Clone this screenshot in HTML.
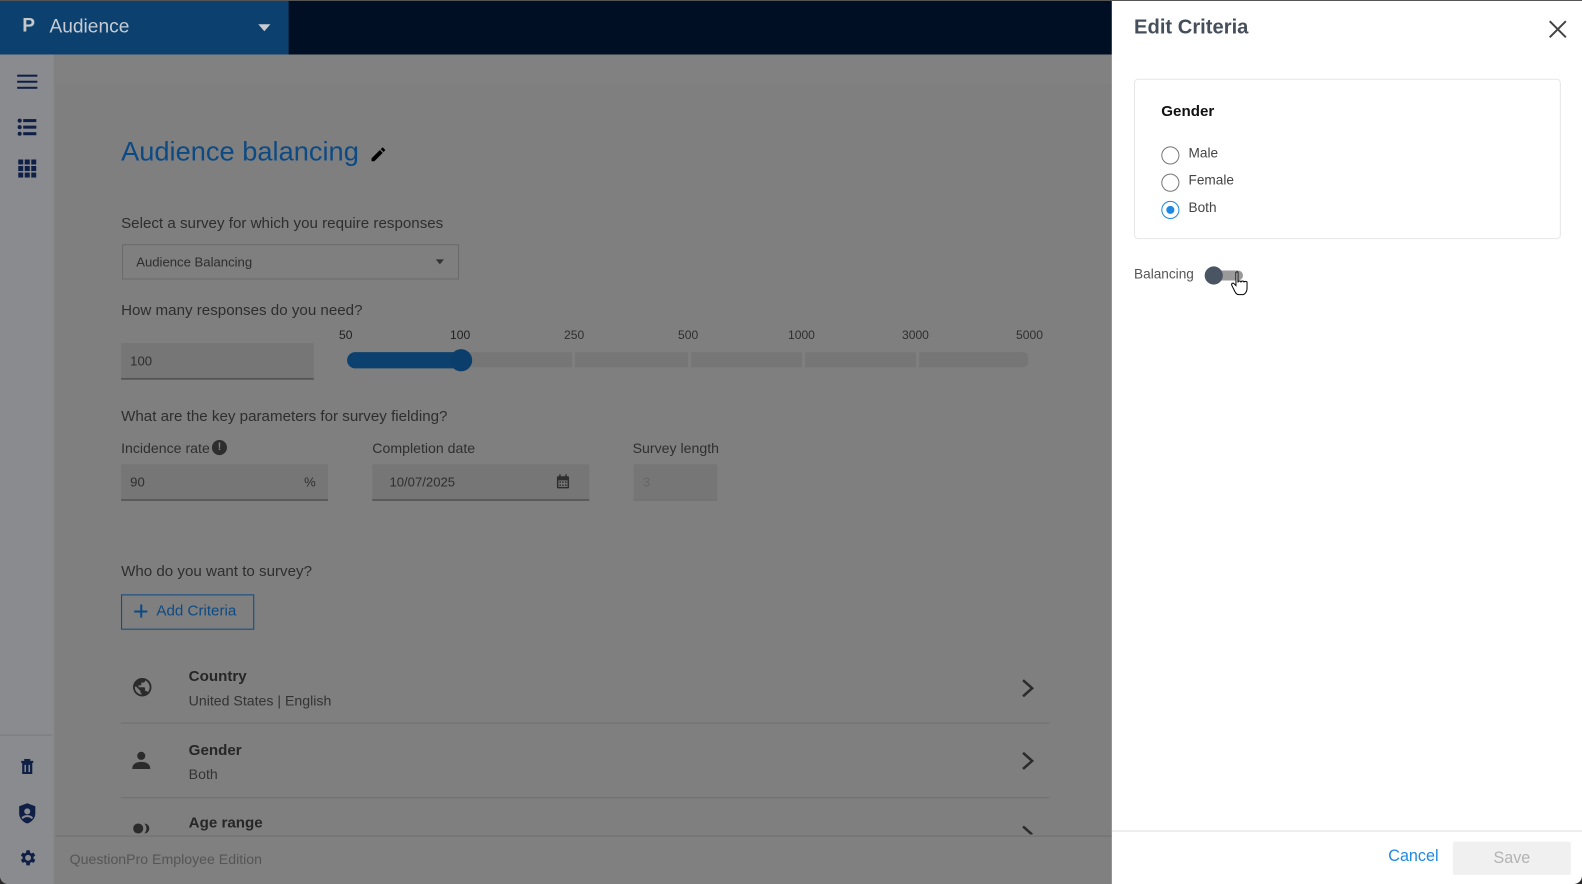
<!DOCTYPE html>
<html><head><meta charset="utf-8"><style>
*{box-sizing:border-box;margin:0;padding:0}
html,body{width:1582px;height:884px;overflow:hidden}
body{background:#2a2a2a;font-family:"Liberation Sans",sans-serif;color:#2f2f2f;position:relative}
#w{position:absolute;left:0;top:0;width:1568px;height:876px;background:#7f7f7f;transform:scale(1.00893,1.00913);transform-origin:0 0;overflow:hidden;border-radius:0 0 8px 8px}
.abs{position:absolute}
.top1{left:0;top:0;width:286px;height:54px;background:#0c416f;border-top:1px solid #555}
.top2{left:286px;top:0;width:816px;height:54px;background:#000f24;border-top:1px solid #555}
.side{left:0;top:54px;width:54px;height:830px;background:#8a8b8f;border-right:1px solid #858585}
.lbl{font-size:15px;color:#2e2e2e}
.inp{background:#767676;border-bottom:1px solid #3c3c3c;font-size:13px;color:#2e2e2e;padding-left:9px;display:flex;align-items:center}
.seg{top:349px;height:15px;background:#767676}
.tick{top:325px;font-size:12px;color:#2e2e2e}
.row{left:120px;width:920px;border-bottom:1px solid #6e6e6e}
.rt{font-size:15px;font-weight:bold;color:#262626}
.rs{font-size:14px;color:#333}
.panel{left:1102px;top:0;width:466px;height:876px;background:#fff;border-top:1px solid #555;border-radius:0 0 8px 0}
.radio{width:18px;height:18px;border-radius:50%;border:1.5px solid #777;position:absolute;left:1151px}
.rl{position:absolute;left:1178px;font-size:13.5px;color:#444}
</style></head><body><div id="w">
<div class="abs top1"><span class="abs" style="left:22px;top:14px;font-size:19px;font-weight:bold;color:#c8c8c8">P</span><span class="abs" style="left:49px;top:15px;font-size:19px;color:#c8ccd2">Audience</span>
<div class="abs" style="left:256px;top:23px;border:6px solid transparent;border-top:7px solid #c8ccd2;border-bottom:0"></div></div>
<div class="abs top2"></div>
<div class="abs side">
<div class="abs" style="left:17px;top:20px;width:20px;height:2px;background:#0f1f45;box-shadow:0 6px 0 #0f1f45,0 12px 0 #0f1f45"></div>
<svg class="abs" style="left:17px;top:63px" width="20" height="18"><g fill="#0f1f45"><circle cx="2.5" cy="2.5" r="2"/><circle cx="2.5" cy="9" r="2"/><circle cx="2.5" cy="15.5" r="2"/><rect x="6" y="1" width="13" height="3"/><rect x="6" y="7.5" width="13" height="3"/><rect x="6" y="14" width="13" height="3"/></g></svg>
<svg class="abs" style="left:18px;top:104px" width="18" height="18"><g fill="#0f1f45"><rect x="0" y="0" width="5" height="5"/><rect x="6.5" y="0" width="5" height="5"/><rect x="13" y="0" width="5" height="5"/><rect x="0" y="6.5" width="5" height="5"/><rect x="6.5" y="6.5" width="5" height="5"/><rect x="13" y="6.5" width="5" height="5"/><rect x="0" y="13" width="5" height="5"/><rect x="6.5" y="13" width="5" height="5"/><rect x="13" y="13" width="5" height="5"/></g></svg>
<div class="abs" style="left:0;top:674px;width:52px;border-top:1px solid #7a7a7a"></div>
<svg class="abs" style="left:20px;top:698px" width="14" height="16"><path d="M1 2h12v2H1zM4 0h6v2H4zM2 4h10v11H2z" fill="#0f1f45"/><path d="M5 6v7M9 6v7" stroke="#8a8b8f" stroke-width="1.5"/></svg>
<svg class="abs" style="left:17px;top:741px" width="20" height="22"><path d="M10 1L18 4v7c0 5-4 9-8 10C6 20 2 16 2 11V4z" fill="#0f1f45"/><circle cx="10" cy="9" r="3" fill="#8a8b8f"/><path d="M5 16c2-3 8-3 10 0" stroke="#8a8b8f" stroke-width="2" fill="none"/></svg>
<svg class="abs" style="left:17px;top:786px" width="20" height="20" viewBox="0 0 24 24"><path fill="#0f1f45" d="M19.4 13a7.5 7.5 0 000-2l2.1-1.6-2-3.5-2.5 1a7.6 7.6 0 00-1.7-1L15 3h-4l-.4 2.9a7.6 7.6 0 00-1.7 1l-2.5-1-2 3.5L6.6 11a7.5 7.5 0 000 2l-2.1 1.6 2 3.5 2.5-1a7.6 7.6 0 001.7 1L11 21h4l.4-2.9a7.6 7.6 0 001.7-1l2.5 1 2-3.5zM13 15.5a3.5 3.5 0 110-7 3.5 3.5 0 010 7z"/></svg>
</div>
<div class="abs" style="left:55px;top:54px;width:1047px;height:30px;background:#818181"></div>
<div class="abs" style="left:120px;top:135px;font-size:27px;color:#0c4a85">Audience balancing</div>
<svg class="abs" style="left:366px;top:144px" width="18" height="18" viewBox="0 0 24 24"><path d="M3 17.25V21h3.75L17.8 9.94l-3.75-3.75zM20.7 7.04a1 1 0 000-1.41l-2.34-2.34a1 1 0 00-1.41 0l-1.83 1.83 3.75 3.75z" fill="#000"/></svg>
<div class="abs lbl" style="left:120px;top:213px">Select a survey for which you require responses</div>
<div class="abs" style="left:121px;top:242px;width:334px;height:35px;border:1px solid #6a6a6a;font-size:13px;padding:9px 13px;color:#2e2e2e">Audience Balancing</div>
<div class="abs" style="left:432px;top:257px;border:4px solid transparent;border-top:5px solid #333;border-bottom:0"></div>
<div class="abs lbl" style="left:120px;top:299px">How many responses do you need?</div>
<div class="abs inp" style="left:120px;top:340px;width:191px;height:36px">100</div>
<span class="abs tick" style="left:336px;color:#1e1e1e">50</span><span class="abs tick" style="left:446px;color:#1e1e1e">100</span><span class="abs tick" style="left:559px">250</span><span class="abs tick" style="left:672px">500</span><span class="abs tick" style="left:781px">1000</span><span class="abs tick" style="left:894px">3000</span><span class="abs tick" style="left:1007px">5000</span>
<div class="abs seg" style="left:456px;width:111px"></div><div class="abs seg" style="left:570px;width:112px"></div><div class="abs seg" style="left:685px;width:110px"></div><div class="abs seg" style="left:798px;width:110px"></div><div class="abs seg" style="left:911px;width:108px;border-radius:0 5px 5px 0"></div>
<div class="abs" style="left:344px;top:349px;width:114px;height:16px;background:#0c416f;border-radius:8px"></div>
<div class="abs" style="left:446px;top:346px;width:22px;height:22px;background:#0c3e6c;border-radius:50%"></div>
<div class="abs lbl" style="left:120px;top:404px">What are the key parameters for survey fielding?</div>
<div class="abs" style="left:120px;top:436px;font-size:14px">Incidence rate</div>
<div class="abs" style="left:210px;top:436px;width:15px;height:15px;border-radius:50%;background:#2e2e2e;color:#7f7f7f;font-size:11px;font-weight:bold;text-align:center;line-height:15px">!</div>
<div class="abs" style="left:369px;top:436px;font-size:14px">Completion date</div>
<div class="abs" style="left:627px;top:436px;font-size:14px">Survey length</div>
<div class="abs inp" style="left:120px;top:460px;width:205px;height:36px">90<span style="margin-left:auto;margin-right:12px">%</span></div>
<div class="abs inp" style="left:369px;top:460px;width:215px;height:36px;padding-left:17px">10/07/2025</div>
<svg class="abs" style="left:551px;top:470px" width="14" height="15"><rect x="1" y="2" width="12" height="12" rx="1" fill="#2e2e2e"/><rect x="2.5" y="6" width="9" height="6.5" fill="#767676"/><path d="M4 0v3M10 0v3" stroke="#2e2e2e" stroke-width="1.5"/><g fill="#2e2e2e"><rect x="3.5" y="7" width="1.5" height="1.5"/><rect x="6.2" y="7" width="1.5" height="1.5"/><rect x="9" y="7" width="1.5" height="1.5"/><rect x="3.5" y="10" width="1.5" height="1.5"/><rect x="6.2" y="10" width="1.5" height="1.5"/><rect x="9" y="10" width="1.5" height="1.5"/></g></svg>
<div class="abs inp" style="left:628px;top:460px;width:83px;height:36px;color:#666;border-bottom-color:#6e6e6e">3</div>
<div class="abs lbl" style="left:120px;top:558px">Who do you want to survey?</div>
<div class="abs" style="left:120px;top:589px;width:132px;height:35px;border:1px solid #0c4a85;color:#0c4a85;font-size:15px;padding:7px 0 0 34px">Add Criteria</div>
<div class="abs" style="left:133px;top:605px;width:13px;height:2px;background:#0c4a85"></div><div class="abs" style="left:138.5px;top:599px;width:2px;height:13px;background:#0c4a85"></div>
<div class="abs row" style="top:644px;height:73px"></div>
<svg class="abs" style="left:130px;top:670px" width="22" height="22" viewBox="0 0 24 24"><path fill="#2b2b2b" d="M12 2a10 10 0 100 20 10 10 0 000-20zm-1 17.9A8 8 0 014 12l1-1 5 5v1a2 2 0 002 2zm6.9-2.5A2 2 0 0016 16h-1v-3a1 1 0 00-1-1H8v-2h2a1 1 0 001-1V7h2a2 2 0 002-2v-.4a8 8 0 012.9 12.8z"/></svg>
<div class="abs rt" style="left:187px;top:662px">Country</div><div class="abs rs" style="left:187px;top:686px">United States | English</div>
<svg class="abs" style="left:1012px;top:672px" width="14" height="20"><path d="M2 2l9 8-9 8" stroke="#2b2b2b" stroke-width="2.5" fill="none"/></svg>
<div class="abs row" style="top:717px;height:74px"></div>
<svg class="abs" style="left:131px;top:744px" width="18" height="20"><circle cx="9" cy="5" r="4" fill="#2b2b2b"/><path d="M0 18c0-5 4-7 9-7s9 2 9 7z" fill="#2b2b2b"/></svg>
<div class="abs rt" style="left:187px;top:735px">Gender</div><div class="abs rs" style="left:187px;top:759px">Both</div>
<svg class="abs" style="left:1012px;top:744px" width="14" height="20"><path d="M2 2l9 8-9 8" stroke="#2b2b2b" stroke-width="2.5" fill="none"/></svg>
<div class="abs rt" style="left:187px;top:807px">Age range</div>
<svg class="abs" style="left:131px;top:815px" width="20" height="12"><circle cx="6" cy="6" r="5" fill="#2b2b2b"/><path d="M12 1a5 5 0 010 10 7 7 0 000-10z" fill="#2b2b2b"/></svg>
<svg class="abs" style="left:1012px;top:817px" width="14" height="10"><path d="M2 2l9 8" stroke="#2b2b2b" stroke-width="2.5" fill="none"/></svg>
<div class="abs" style="left:55px;top:828px;width:1047px;height:56px;background:#808080;border-top:1px solid #6e6e6e"></div>
<div class="abs" style="left:69px;top:843px;font-size:14px;color:#555">QuestionPro Employee Edition</div>
<div class="abs panel"></div>
<div class="abs" style="left:1124px;top:16px;font-size:20px;font-weight:bold;color:#454f5b">Edit Criteria</div>
<svg class="abs" style="left:1535px;top:20px" width="18" height="18"><path d="M1 1l16 16M17 1L1 17" stroke="#444" stroke-width="2"/></svg>
<div class="abs" style="left:1124px;top:78px;width:423px;height:159px;border:1px solid #e6e6e6;border-radius:4px"></div>
<div class="abs" style="left:1151px;top:102px;font-size:15px;font-weight:bold;color:#111">Gender</div>
<div class="radio" style="top:145px"></div><span class="rl" style="top:144px">Male</span>
<div class="radio" style="top:172px"></div><span class="rl" style="top:171px">Female</span>
<div class="radio" style="top:199px;border-color:#1e88e5"><div style="position:absolute;left:3.5px;top:3.5px;width:8px;height:8px;border-radius:50%;background:#1e88e5"></div></div><span class="rl" style="top:198px">Both</span>
<div class="abs" style="left:1124px;top:264px;font-size:13.5px;color:#555">Balancing</div>
<div class="abs" style="left:1198px;top:268px;width:34px;height:10px;border-radius:5px;background:#9a9a9a"></div>
<div class="abs" style="left:1194px;top:264px;width:18px;height:18px;border-radius:50%;background:#4a5563"></div>
<svg class="abs" style="left:1220px;top:268px" width="20" height="26"><path d="M5 2c1-1 2-1 2 0v10c0-2 3-2 3 0 0-2 3-2 3 0 0-1.5 3-1.5 3 0v6c0 3-2 6-5 6H8c-2 0-3-1-4-3L1 15c-1-2 1-3 2-2l2 2z" fill="#fff" stroke="#000" stroke-width="1"/></svg>
<div class="abs" style="left:1102px;top:823px;width:466px;border-top:1px solid #ddd"></div>
<div class="abs" style="left:1376px;top:840px;font-size:16px;color:#1e88e5">Cancel</div>
<div class="abs" style="left:1440px;top:834px;width:117px;height:33px;background:#f0f0f0;border-radius:2px;color:#b3b3b3;font-size:16px;text-align:center;line-height:33px">Save</div>
</div></body></html>
